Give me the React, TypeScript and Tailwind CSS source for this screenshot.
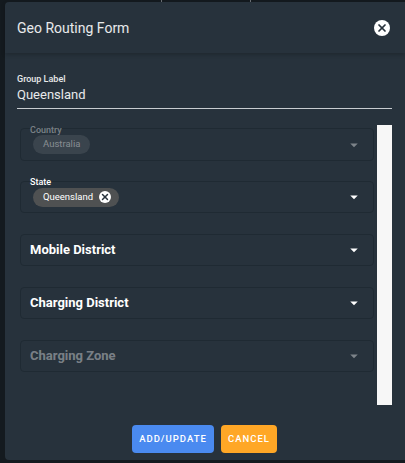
import { X } from 'lucide-react';

function Caret({ dim }: { dim?: boolean }) {
  return (
    <svg width="18" height="18" viewBox="0 0 24 24" className={dim ? 'fill-white/40' : 'fill-white'}>
      <path d="M7 10l5 5 5-5z" />
    </svg>
  );
}

function ClearIcon({ large }: { large?: boolean }) {
  return (
    <span
      className={`flex items-center justify-center rounded-full bg-white ${large ? 'h-[16px] w-[16px]' : 'h-[12px] w-[12px]'}`}
    >
      <X size={large ? 12 : 10} strokeWidth={3.5} className="text-[#27323c]" />
    </span>
  );
}

function ChipField({ label, chip, disabled }: { label: string; chip: string; disabled?: boolean }) {
  return (
    <div
      className={`relative flex items-center justify-between rounded border border-[#1f2a33] pl-[12px] pr-[10px] ${disabled ? 'h-[33px]' : 'h-[32px]'}`}
    >
      <span
        className={`absolute left-[9px] text-[9px] font-medium leading-[11px] ${disabled ? 'top-[-4px] text-white/40' : 'top-[-5px] text-white'}`}
      >
        {label}
      </span>
      <span
        className={`flex h-[19px] items-center gap-[6px] rounded-full pl-[10px] text-[9.5px] ${
          disabled ? 'bg-[#3a444d] pr-[10px] text-white/40' : 'bg-[#4f5152] pr-[8px] text-white'
        }`}
      >
        {chip}
        {!disabled && <ClearIcon />}
      </span>
      <Caret dim={disabled} />
    </div>
  );
}

function SelectRow({ label, disabled }: { label: string; disabled?: boolean }) {
  return (
    <div className="flex h-[32px] items-center justify-between rounded border border-[#1f2a33] pl-[9px] pr-[10px]">
      <span className={`text-[13px] font-bold ${disabled ? 'text-white/40' : 'text-white'}`}>{label}</span>
      <Caret dim={disabled} />
    </div>
  );
}

export default function App() {
  return (
    <div className="h-[463px] w-[405px] overflow-hidden bg-[#141a1f] font-['Roboto',sans-serif]">
      <div className="flex h-[2px] pl-[161px]">
        <div className="w-[1px] bg-[#6b7075]" />
        <div className="ml-[88px] w-[1px] bg-[#6b7075]" />
      </div>
      <div className="ml-[5px] flex h-[458px] w-[420px] flex-col rounded-[4px] bg-[#27323c]">
        <div className="flex h-[51px] w-[400px] items-center justify-between pl-[12px] pr-[15px] shadow-[0_2px_4px_rgba(0,0,0,0.2)]">
          <span className="text-[14px] leading-[20px] text-white/90">Geo Routing Form</span>
          <ClearIcon large />
        </div>

        <div className="w-[387px] pl-[12px] pt-[21px]">
          <div className="text-[9px] font-medium leading-[11px] text-white/90">Group Label</div>
          <div className="border-b border-[#c8ccd0] pb-[4px] text-[13px] leading-[19px] text-white/90">Queensland</div>
        </div>

        <div className="ml-[15px] mt-[16px] flex h-[280px] w-[372px] gap-[3px]">
          <div className="flex w-[354px] flex-col pt-[3px]">
            <ChipField label="Country" chip="Australia" disabled />
            <div className="mt-[20px]">
              <ChipField label="State" chip="Queensland" />
            </div>
            <div className="mt-[21px]">
              <SelectRow label="Mobile District" />
            </div>
            <div className="mt-[21px]">
              <SelectRow label="Charging District" />
            </div>
            <div className="mt-[21px]">
              <SelectRow label="Charging Zone" disabled />
            </div>
          </div>
          <div className="h-full w-[15px] bg-[#f7f7f7]" />
        </div>

        <div className="flex w-[399px] justify-center gap-[7px] pt-[20px]">
          <button className="h-[28px] w-[82px] rounded bg-[#4a8af0] text-[9.5px] font-medium tracking-[1px] text-white">
            ADD/UPDATE
          </button>
          <button className="h-[28px] w-[56px] rounded bg-[#ffa726] text-[9.5px] font-medium tracking-[1px] text-white">
            CANCEL
          </button>
        </div>
      </div>
    </div>
  );
}
